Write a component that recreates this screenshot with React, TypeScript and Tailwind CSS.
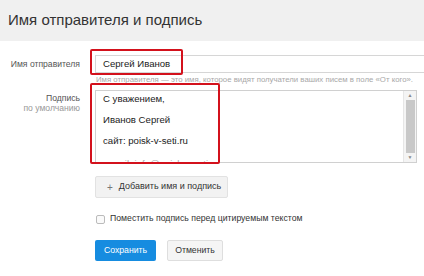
import React from "react";

const SignatureSettings: React.FC = () => {
    return (
        <div className="relative w-[424px] h-[276px] bg-white overflow-hidden text-[#333]" style={{ fontFamily: '"Liberation Sans", Arial, sans-serif' }}>
            <div className="h-[41px] bg-[#f0f0f0] flex items-center pl-2 text-[15px] text-[#333]">Имя отправителя и подпись</div>

            <div className="flex mt-[14px]">
                <div className="w-[80px] shrink-0 text-right text-[8.6px] text-[#555] pt-[3px] leading-[12px] whitespace-nowrap">Имя отправителя</div>
                <div className="ml-[15px] flex-1 min-w-0">
                    <div className="h-[18px] border border-[#d6d6d6] border-r-0 flex items-center pl-[7px] text-[9.6px] text-[#222]">Сергей Иванов</div>
                    <div className="mt-[2px] pl-[1px] text-[7.8px] leading-[10px] text-[#a8a8a8] whitespace-nowrap">Имя отправителя — это имя, которое видят получатели ваших писем в поле «От кого».</div>
                </div>
            </div>

            <div className="flex mt-[5px]">
                <div className="w-[80px] shrink-0 text-right text-[8.6px] leading-[10px] pt-[3px] whitespace-nowrap">
                    <div className="text-[#555]">Подпись</div>
                    <div className="text-[#999]">по умолчанию</div>
                </div>
                <div className="ml-[15px] w-[322px] h-[73px] border border-[#d0d0d0] flex overflow-hidden">
                    <div className="flex-1 pl-[7px] -mt-[3px] text-[9.6px] leading-[21px] text-[#222]">
                        <div>С уважением,</div>
                        <div>Иванов Сергей</div>
                        <div>сайт: poisk-v-seti.ru</div>
                        <div className="text-[#aaa] mt-[2px]">e-mail: info@poisk-v-seti.ru</div>
                    </div>
                    <div className="w-[13px] border-l border-[#e6e6e6] bg-[#f4f4f4] flex flex-col items-center">
                        <div className="h-[9px] text-[5px] leading-[9px] text-[#888]">▲</div>
                        <div className="w-[9px] flex-1 bg-[#c8c8c8]" />
                        <div className="h-[9px] text-[5px] leading-[9px] text-[#888]">▼</div>
                    </div>
                </div>
            </div>

            <div className="ml-[95px] mt-[13px]">
                <button className="h-[22px] w-[133px] bg-[#f2f2f2] border border-[#e2e2e2] rounded-[2px] text-[9px] text-[#333] flex items-center pl-[11px] gap-[6px]">
                    <span className="text-[10px] text-[#777]">+</span>
                    <span>Добавить имя и подпись</span>
                </button>
            </div>

            <div className="ml-[96px] mt-[15px] h-[12px] flex items-center gap-[5px]">
                <div className="w-[9px] h-[9px] border border-[#bbb] rounded-[2px] bg-[#fafafa]" />
                <span className="text-[8.7px] text-[#333]">Поместить подпись перед цитируемым текстом</span>
            </div>

            <div className="ml-[95px] mt-[15px] flex gap-[11px]">
                <button className="w-[61px] h-[21px] bg-[#168ce0] rounded-[2px] text-white text-[8.7px]">Сохранить</button>
                <button className="w-[56px] h-[21px] bg-[#f5f5f5] border border-[#dedede] rounded-[2px] text-[#333] text-[8.7px]">Отменить</button>
            </div>

            <div className="absolute left-[90px] top-[49px] w-[93px] h-[26px] border-2 border-[#d3111c] rounded-[2px]" />
            <div className="absolute left-[90px] top-[83px] w-[130px] h-[81px] border-2 border-[#d3111c] rounded-[2px]" />
        </div>
    );
};

export default function App() {
    return <SignatureSettings />;
}
